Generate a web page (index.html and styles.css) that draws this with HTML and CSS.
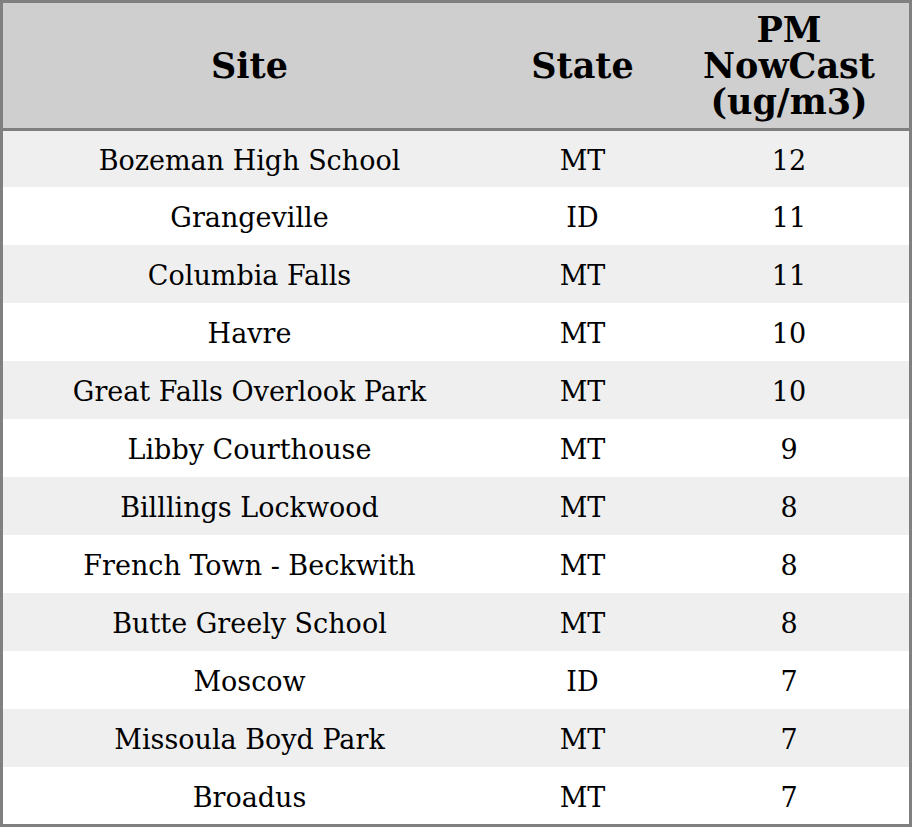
FILE: index.html
```html
<!DOCTYPE html>
<html>
<head>
<meta charset="utf-8">
<link rel="stylesheet" href="styles.css">
</head>
<body>
<table class="aq">
  <colgroup>
    <col class="c-site">
    <col class="c-state">
    <col class="c-pm">
  </colgroup>
  <thead>
    <tr><th>Site</th><th>State</th><th>PM<br>NowCast<br>(ug/m3)</th></tr>
  </thead>
  <tbody>
    <tr class="odd"><td>Bozeman High School</td><td>MT</td><td>12</td></tr>
    <tr><td>Grangeville</td><td>ID</td><td>11</td></tr>
    <tr class="odd"><td>Columbia Falls</td><td>MT</td><td>11</td></tr>
    <tr><td>Havre</td><td>MT</td><td>10</td></tr>
    <tr class="odd"><td>Great Falls Overlook Park</td><td>MT</td><td>10</td></tr>
    <tr><td>Libby Courthouse</td><td>MT</td><td>9</td></tr>
    <tr class="odd"><td>Billlings Lockwood</td><td>MT</td><td>8</td></tr>
    <tr><td>French Town - Beckwith</td><td>MT</td><td>8</td></tr>
    <tr class="odd"><td>Butte Greely School</td><td>MT</td><td>8</td></tr>
    <tr><td>Moscow</td><td>ID</td><td>7</td></tr>
    <tr class="odd"><td>Missoula Boyd Park</td><td>MT</td><td>7</td></tr>
    <tr><td>Broadus</td><td>MT</td><td>7</td></tr>
  </tbody>
</table>
</body>
</html>
```

FILE: styles.css
```css
html, body {
  margin: 0;
  padding: 0;
  background: #ffffff;
}
.aq {
  width: 912px;
  border-collapse: separate;
  border-spacing: 0;
  table-layout: fixed;
  border: 3px solid #808080;
  font-family: "DejaVu Serif", serif;
  color: #000;
}
.c-site { width: 493px; }
.c-state { width: 173px; }
.c-pm { width: 240px; }
.aq th {
  background: #cfcfcf;
  font-weight: bold;
  font-size: 35px;
  line-height: 36px;
  height: 125px;
  padding: 0;
  text-align: center;
  vertical-align: middle;
  border-bottom: 3px solid #808080;
  box-sizing: content-box;
}
.aq td {
  font-size: 27px;
  height: 55px;
  padding: 3px 0 0;
  text-align: center;
  vertical-align: middle;
  background: #ffffff;
}
.aq tr.odd td {
  background: #efefef;
}
.aq tbody tr:first-child td { height: 53px; }
.aq tbody tr:last-child td { height: 54px; }
```
